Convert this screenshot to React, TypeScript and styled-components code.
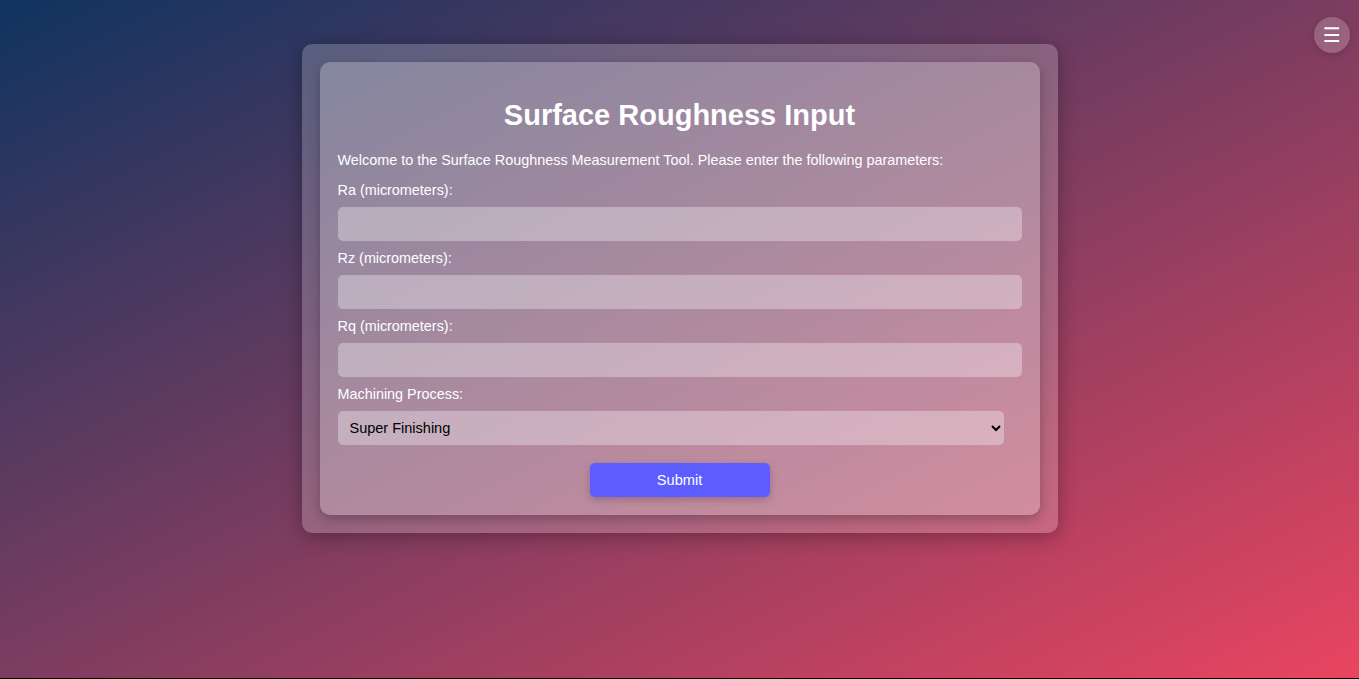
import React from "react";
import styled, { createGlobalStyle } from "styled-components";

const Global = createGlobalStyle`
  html { background: #000; }
  body {
    margin: 0;
    height: 678px;
    font-family: "Liberation Sans", Arial, sans-serif;
    background: linear-gradient(to bottom right, #0f3460, #e94560);
    overflow: hidden;
  }
  * { box-sizing: border-box; }
`;

const Page = styled.div`
  display: flex;
  justify-content: center;
  padding-top: 44px;
`;

const Outer = styled.div`
  width: 756px;
  padding: 18px;
  border-radius: 10px;
  background: rgba(255, 255, 255, 0.2);
  box-shadow: 0 4px 20px rgba(0, 0, 0, 0.3);
`;

const Card = styled.form`
  display: flex;
  flex-direction: column;
  padding: 18px;
  border-radius: 10px;
  background: rgba(255, 255, 255, 0.25);
  box-shadow: 0 4px 12px rgba(0, 0, 0, 0.25);
  color: #fff;
`;

const Title = styled.h1`
  margin: 18px 0 20px;
  text-align: center;
  font-size: 29px;
  line-height: 34px;
  font-weight: 700;
`;

const Intro = styled.p`
  margin: 0 0 13px;
  font-size: 14.4px;
  line-height: 17px;
`;

const Label = styled.label`
  display: block;
  font-size: 14.4px;
  line-height: 17px;
  margin-bottom: 8px;
`;

const Field = styled.input`
  display: block;
  width: 100%;
  height: 34px;
  margin-bottom: 9px;
  border: none;
  border-radius: 5px;
  padding: 0 12px;
  background: rgba(255, 255, 255, 0.32);
  font-family: inherit;
  font-size: 15px;
  outline: none;
`;

const Select = styled.select`
  display: block;
  width: 666px;
  height: 34px;
  border: none;
  border-radius: 5px;
  padding: 0 8px;
  background: rgba(255, 255, 255, 0.32);
  font-family: "Liberation Sans", Arial, sans-serif;
  font-size: 14.5px;
  color: #000;
  outline: none;
`;

const Actions = styled.div`
  display: flex;
  justify-content: center;
  margin-top: 18px;
`;

const Button = styled.button`
  width: 180px;
  height: 34px;
  border: none;
  border-radius: 5px;
  background: #5c5cff;
  color: #fff;
  font-family: inherit;
  font-size: 14.6px;
  box-shadow: 0 3px 8px rgba(0, 0, 0, 0.2);
  cursor: pointer;
`;

const Menu = styled.button`
  position: fixed;
  top: 17px;
  right: 9px;
  width: 36px;
  height: 36px;
  border: none;
  border-radius: 50%;
  background: rgba(255, 255, 255, 0.2);
  color: #fff;
  font-size: 20px;
  line-height: 36px;
  padding: 0;
  display: flex;
  align-items: center;
  justify-content: center;
  box-shadow: 0 2px 6px rgba(0, 0, 0, 0.15);
  font-family: "DejaVu Sans", sans-serif;
`;

const fields = ["Ra", "Rz", "Rq"];

export default function App() {
  return (
    <>
      <Global />
      <Menu aria-label="menu">☰</Menu>
      <Page>
        <Outer>
          <Card onSubmit={(e) => e.preventDefault()}>
            <Title>Surface Roughness Input</Title>
            <Intro>
              Welcome to the Surface Roughness Measurement Tool. Please enter the following parameters:
            </Intro>
            {fields.map((f) => (
              <div key={f}>
                <Label htmlFor={f}>{f} (micrometers):</Label>
                <Field id={f} type="number" />
              </div>
            ))}
            <Label htmlFor="proc">Machining Process:</Label>
            <Select id="proc" defaultValue="Super Finishing">
              <option>Turning</option>
              <option>Milling</option>
              <option>Grinding</option>
              <option>Super Finishing</option>
            </Select>
            <Actions>
              <Button type="submit">Submit</Button>
            </Actions>
          </Card>
        </Outer>
      </Page>
    </>
  );
}
